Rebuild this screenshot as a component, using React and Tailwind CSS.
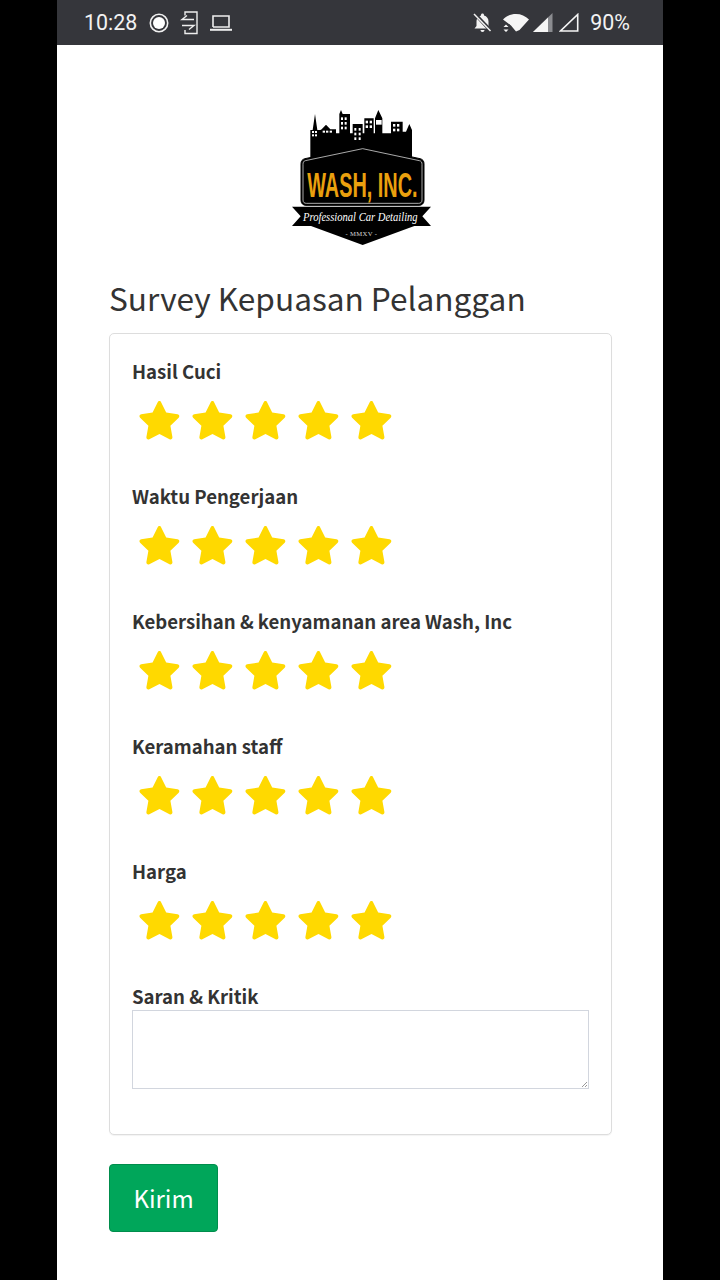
const questions = ['Hasil Cuci', 'Waktu Pengerjaan', 'Kebersihan & kenyamanan area Wash, Inc', 'Keramahan staff', 'Harga'];

function Star() {
  return (
    <svg width="43" height="41" viewBox="0 0 43 41" className="block">
      <path
        d="M21.5 2c.8 0 1.300.5 1.600 1.200l5.100 10.400 11.400 1.700c1.700.3 2.300 2.200 1.100 3.400l-8.300 8 2 11.400c.3 1.700-1.400 2.900-2.900 2.100l-10-5.300-10.200 5.300c-1.500.8-3.200-.4-2.900-2.100l2-11.400-8.300-8c-1.200-1.200-.6-3.100 1.100-3.400l11.400-1.700 5.100-10.400c.4-.7.900-1.200 1.800-1.200z"
        fill="#ffd900"
      />
    </svg>
  );
}

function Stars() {
  return (
    <div className="flex gap-[10px] pl-[6px]">
      {[1, 2, 3, 4, 5].map((n) => (
        <Star key={n} />
      ))}
    </div>
  );
}

function Logo() {
  return (
    <svg width="160" height="155" viewBox="0 0 480 465" className="block">
      <path
        d="M88 175V90H95L102 42L109 90H118L122 88L135 74L148 88H165V100H175V42L180 30L185 42H207V100H215V72H245V100H250V55H278V100H282V55L292 30L304 55V100H330V65H365V95H375L385 72L393 90V175Z"
        fill="#000"
      />
      <g fill="#fff">
        <rect x="93" y="93" width="6" height="6" /><rect x="102" y="93" width="6" height="6" />
        <rect x="93" y="103" width="6" height="6" /><rect x="102" y="103" width="6" height="6" />
        <rect x="125" y="92" width="7" height="6" /><rect x="135" y="92" width="7" height="6" /><rect x="146" y="92" width="7" height="6" />
        <rect x="180" y="52" width="6" height="8" /><rect x="191" y="52" width="6" height="8" />
        <rect x="180" y="66" width="6" height="8" /><rect x="191" y="66" width="6" height="8" />
        <rect x="180" y="80" width="6" height="8" /><rect x="191" y="80" width="6" height="8" />
        <rect x="220" y="84" width="6" height="8" /><rect x="233" y="84" width="6" height="8" />
        <rect x="220" y="98" width="6" height="8" /><rect x="233" y="98" width="6" height="8" />
        <rect x="220" y="112" width="6" height="8" /><rect x="233" y="112" width="6" height="8" />
        <rect x="254" y="62" width="7" height="8" /><rect x="266" y="62" width="7" height="8" />
        <rect x="254" y="76" width="7" height="8" /><rect x="266" y="76" width="7" height="8" />
        <rect x="285" y="60" width="17" height="14" />
        <rect x="336" y="72" width="7" height="8" /><rect x="348" y="72" width="7" height="8" />
        <rect x="336" y="86" width="7" height="8" /><rect x="348" y="86" width="7" height="8" />
      </g>
      <path
        d="M72 176 245 139l172 37c8 2 12 7 12 15v110c0 9-6 15-15 15H75c-9 0-15-6-15-15V191c0-8 4-13 12-15z"
        fill="#000"
        stroke="#000"
        strokeWidth="3"
      />
      <path
        d="M73 182 245 146l170 36c6 1 8 5 8 11v107c0 7-4 10-10 10H76c-6 0-10-3-10-10V193c0-6 2-10 7-11z"
        fill="none"
        stroke="#fff"
        strokeWidth="2"
      />
      <text
        transform="translate(244 290) scale(0.573 1)"
        textAnchor="middle"
        fontFamily='"Liberation Sans", sans-serif'
        fontWeight="700"
        fontSize="104"
        fill="#eaa00e"
      >
        WASH, INC.
      </text>
      <path d="M33 320h417l-26 29 26 29H400l-155 57-155-57H33l26-29z" fill="#000" />
      <text
        x="238"
        y="362"
        textAnchor="middle"
        textLength="344"
        lengthAdjust="spacingAndGlyphs"
        fontFamily='"Liberation Serif", serif'
        fontStyle="italic"
        fontSize="38"
        fill="#fff"
      >
        Professional Car Detailing
      </text>
      <text
        x="241"
        y="408"
        textAnchor="middle"
        fontFamily='"Liberation Serif", serif'
        fontSize="20"
        letterSpacing="1"
        fill="#d8d8d8"
      >
        - MMXV -
      </text>
    </svg>
  );
}

function StatusBar() {
  return (
    <div className="flex h-[45px] items-center justify-between bg-[#35363b] pl-[27px] pr-[33px] text-white font-['Roboto',sans-serif]">
      <div className="flex items-center">
        <span className="w-[52px] text-[21.4px] leading-none text-[#f2f2f2]">10:28</span>
        <svg width="20" height="20" viewBox="0 0 20 20" className="ml-[13px] block">
          <circle cx="10" cy="10" r="8.7" fill="none" stroke="#f0f0f0" strokeWidth="1.6" />
          <circle cx="10" cy="10" r="6" fill="#fff" />
        </svg>
        <svg width="20" height="24" viewBox="0 0 20 24" className="ml-[11px] block" fill="none" stroke="#eee" strokeWidth="1.4">
          <path d="M5 4.500V1H17V22.500H5V19" />
          <path d="M14 8.500H2L7 4.500M2 14.500H14L9 18.500" />
        </svg>
        <svg width="24" height="18" viewBox="0 0 24 18" className="ml-[9px] block" fill="none" stroke="#eee" strokeWidth="1.6">
          <path d="M4 13V2h16v11H4" />
          <path d="M1 15.800h22" strokeWidth="2" />
        </svg>
      </div>
      <div className="flex items-center">
        <svg width="21" height="21" viewBox="0 0 21 21" className="-ml-[2px] block">
          <path d="M10.500 1.500c.9 0 1.500.6 1.500 1.500v.6c2.800.7 4.500 3 4.500 5.900v4.500l2 2.500H2.500l2-2.500V9.500c0-1.600.5-3 1.500-4 1-1 2-1.600 3-1.900V3c0-.9.6-1.500 1.500-1.500zM8.500 18h4c0 1.200-.9 2-2 2s-2-.8-2-2z" fill="#f2f2f2" />
          <path d="M2.500 1.500 19 19" stroke="#35363b" strokeWidth="3.500" />
          <path d="M2 2 18.500 19" stroke="#f2f2f2" strokeWidth="1.500" />
        </svg>
        <svg width="28" height="19" viewBox="0 0 28 19" className="ml-[9px] block">
          <path d="M1 6.500C4.500 3 9 1 14 1s9.500 2 13 5.500L17.500 17 14 18.500 9 12.500z" fill="#f5f5f5" />
          <path d="M0 11.500h8V19H0z" fill="#35363b" />
          <path d="M4 11.500 6.500 14h-5zM4 19l2.500-2.500h-5z" fill="#f5f5f5" />
        </svg>
        <svg width="20" height="19" viewBox="0 0 20 19" className="ml-[3px] block">
          <path d="M19.500 0v19H0z" fill="#8b8c90" />
          <path d="M15 4.400V19H0z" fill="#f5f5f5" />
        </svg>
        <svg width="20" height="19" viewBox="0 0 20 19" className="ml-[6px] block">
          <path d="M18.700 1.500V18H1.500z" fill="none" stroke="#f5f5f5" strokeWidth="1.600" />
        </svg>
        <span className="ml-[11px] text-[21.4px] leading-none text-[#f2f2f2]">90%</span>
      </div>
    </div>
  );
}

export default function App() {
  return (
    <div className="min-h-[1280px] bg-black px-[57px] font-['Noto_Sans_CJK_SC','Noto_Sans',sans-serif]">
      <div className="min-h-[1280px] bg-white">
        <StatusBar />
        <div className="pl-[52px] pr-[51px] pt-[55px]">
          <div className="flex justify-center">
            <Logo />
          </div>
          <h1 className="mt-[19px] text-[31.6px] leading-[46px] font-normal text-[#333]">Survey Kepuasan Pelanggan</h1>
          <form className="mt-[13px]">
            <div className="rounded-[5px] border border-[#dddddd] bg-white pl-[22px] pr-[22px] pt-[23px] pb-[45px] shadow-[0_1px_1px_rgba(0,0,0,0.05)]">
              {questions.map((q) => (
                <div key={q} className="mb-[26px]">
                  <label className="block text-[18.6px] leading-[28px] font-bold text-[#333]">{q}</label>
                  <div className="mt-[14px] h-[57px]">
                    <Stars />
                  </div>
                </div>
              ))}
              <label className="block text-[18.6px] leading-[28px] font-bold text-[#333]">Saran &amp; Kritik</label>
              <div className="relative">
                <textarea className="block h-[79px] w-full resize-none border border-[#d2d6de] bg-white outline-none" />
                <svg width="5" height="5" viewBox="0 0 5 5" className="absolute bottom-[2px] right-[2px]" stroke="#999" strokeWidth="1">
                  <path d="M0 5 5 0M3 5 5 3" />
                </svg>
              </div>
            </div>
            <button type="button" className="mt-[29px] block h-[68px] w-[109px] rounded-[4px] border border-[#008d4c] bg-[#00a65a] text-[24px] text-white">
              Kirim
            </button>
          </form>
        </div>
      </div>
    </div>
  );
}
